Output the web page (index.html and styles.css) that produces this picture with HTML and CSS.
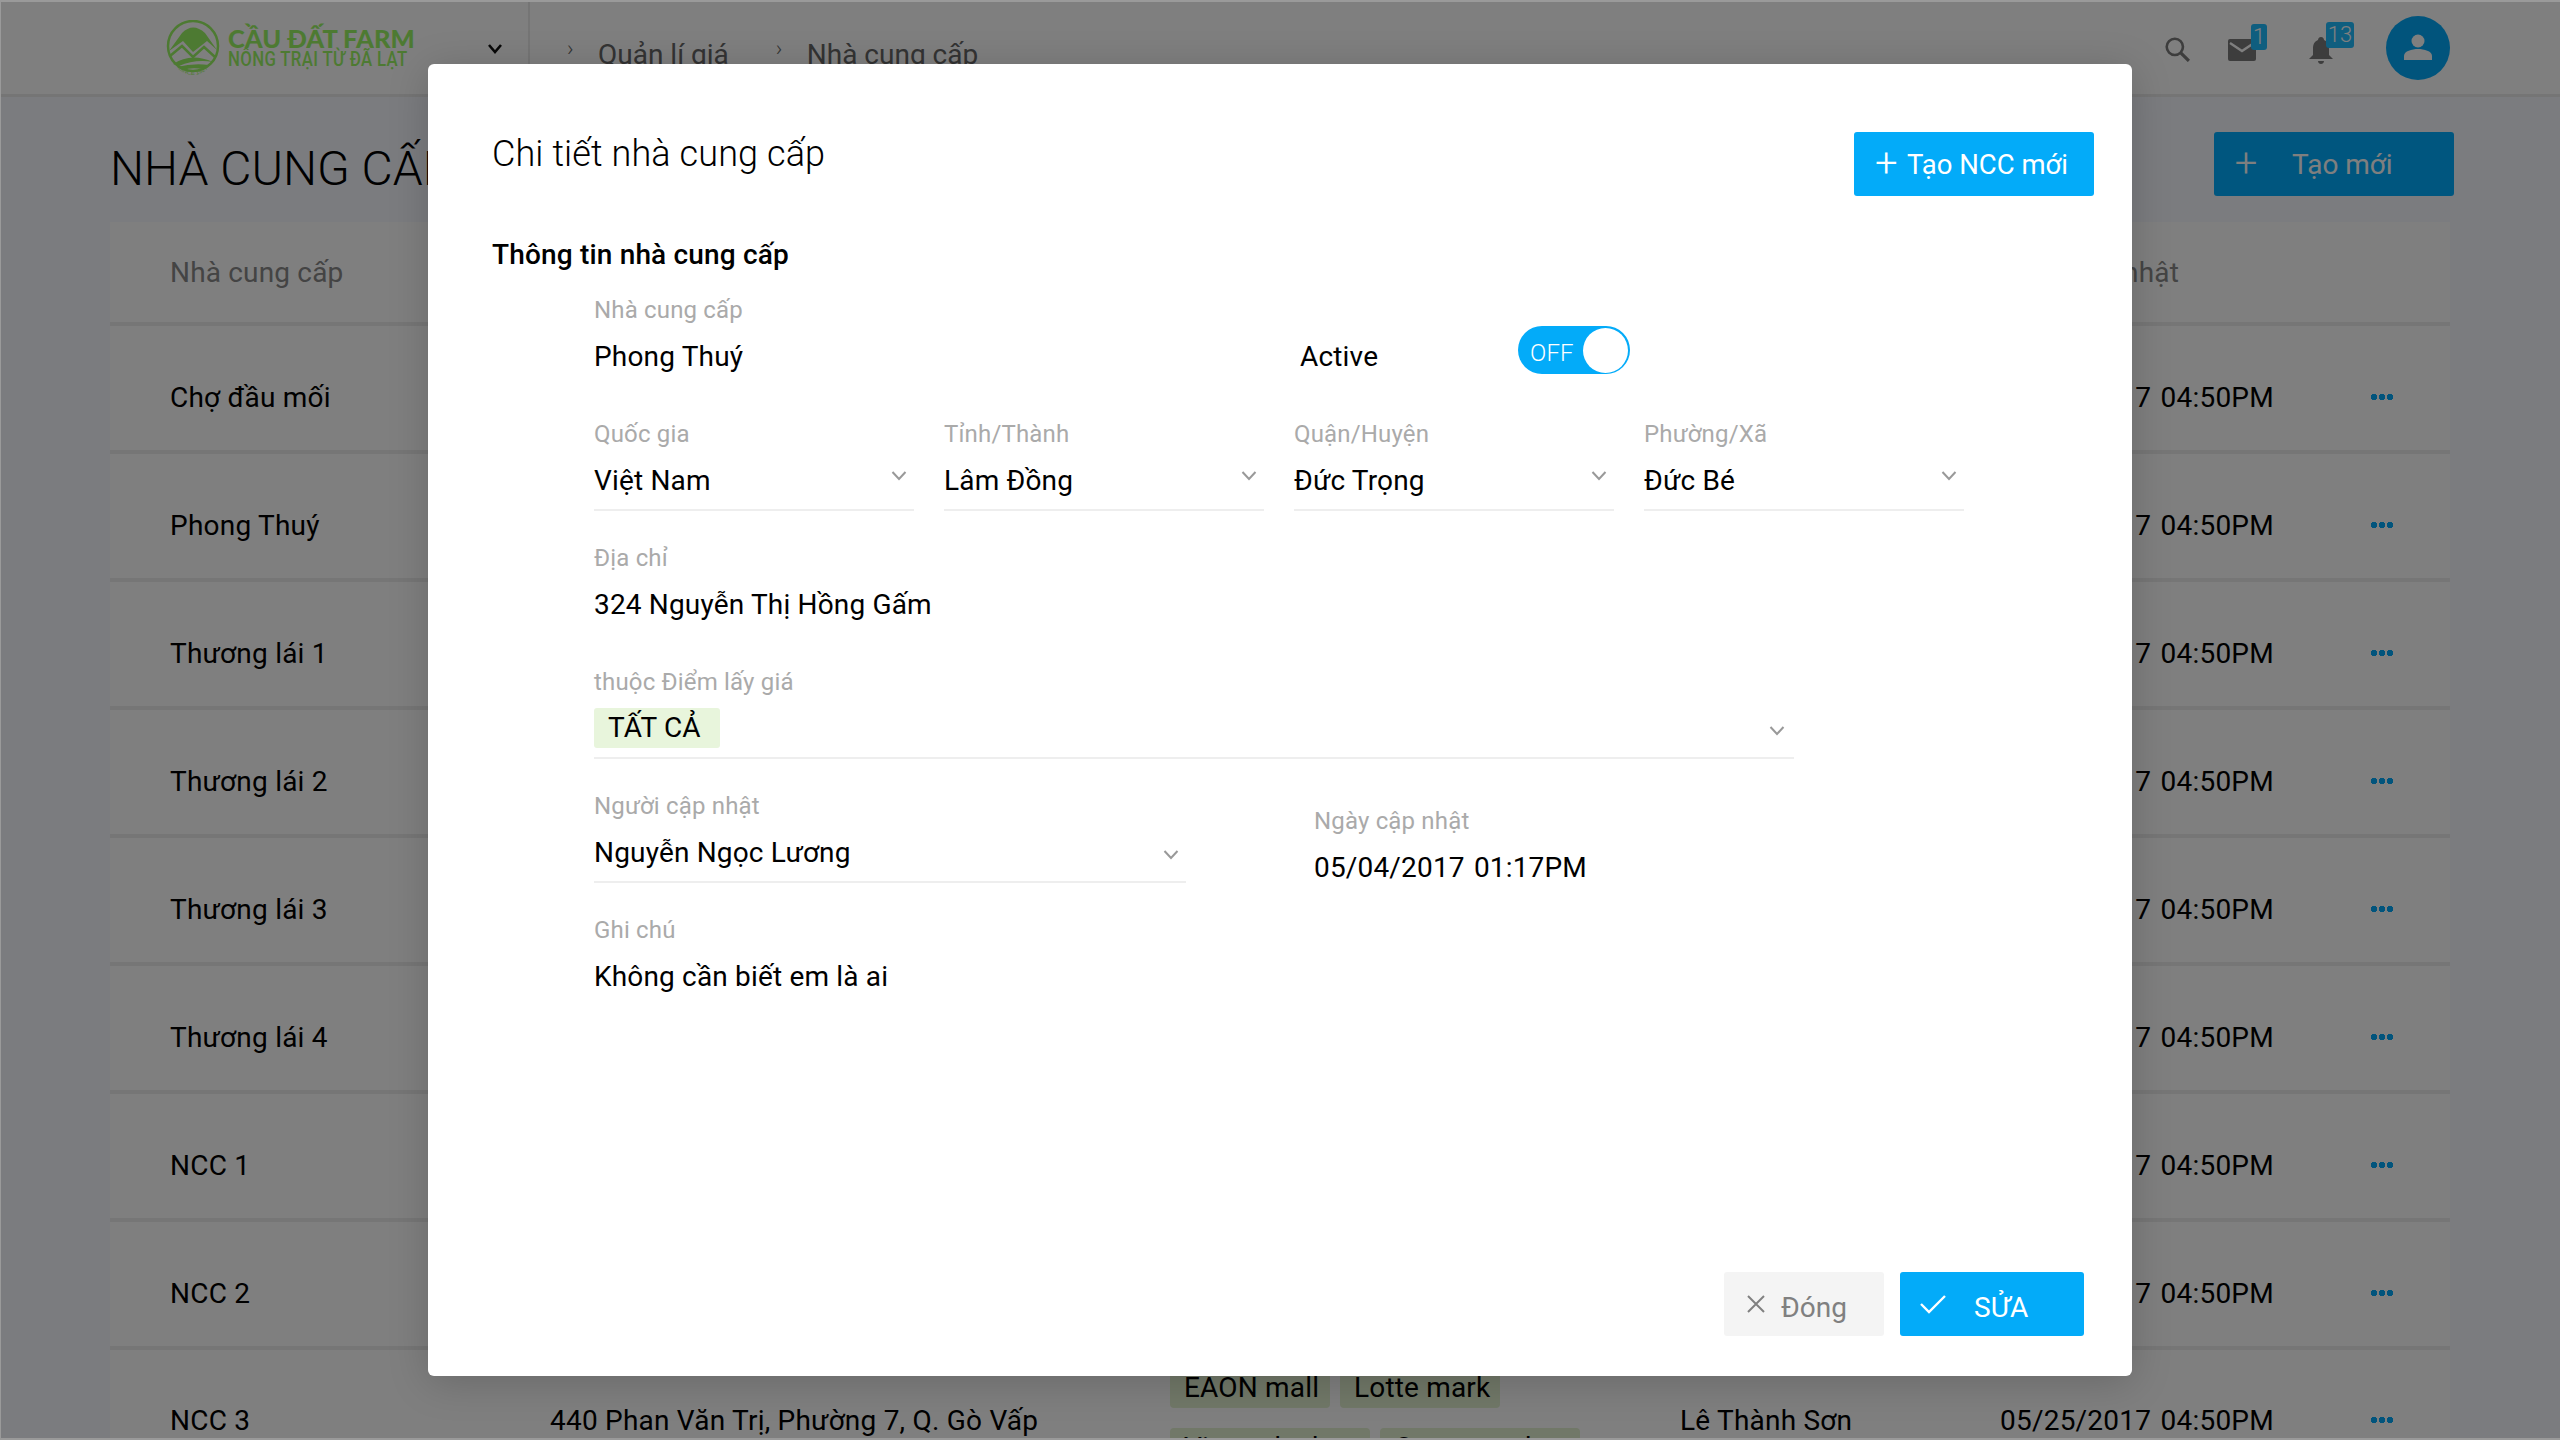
FILE: index.html
```html
<!DOCTYPE html>
<html lang="vi">
<head>
<meta charset="utf-8">
<title>Nhà cung cấp</title>
<link rel="stylesheet" href="styles.css">
</head>
<body>
<div class="page">
  <header class="topbar">
    <div class="brand">
      <svg class="logo-mark" viewBox="0 0 56 60" width="56" height="60">
        <defs><path id="since-arc" d="M12 48 Q28 62 44 48"/></defs>
        <circle cx="28" cy="26" r="25" fill="none" stroke="#9bf565" stroke-width="2.500"/>
        <path d="M4 31 L17 13 Q28 2 40 13 L52 30 L42 21 L37 25 L28 32 L18 21 Z" fill="#9bf565"/>
        <path d="M5 36 L17 26 L28 37 L39 27 L50 37" fill="none" stroke="#9bf565" stroke-width="2.500"/>
        <path d="M8 44 Q26 32 48 42 Q30 39 14 46 Z M12 47 Q28 43 44 45 L38 49 Q26 47 18 50 Z" fill="#9bf565"/>
        <text class="since"><textPath href="#since-arc" startOffset="50%" text-anchor="middle">SINCE 1927</textPath></text>
      </svg>
      <div class="brand-text">
        <div class="brand-name">CẦU ĐẤT FARM</div>
        <div class="brand-sub">NÔNG TRẠI TỪ ĐÃ LẠT</div>
      </div>
    </div>
    <svg class="brand-chevron" viewBox="0 0 16 12" width="16" height="12"><path d="M2 2 L8 9 L14 2" fill="none" stroke="#111" stroke-width="2.600"/></svg>
    <nav class="crumbs">
      <span class="crumb-sep">›</span><span class="crumb">Quản lí giá</span>
      <span class="crumb-sep">›</span><span class="crumb">Nhà cung cấp</span>
    </nav>
    <div class="top-icons">
      <svg class="i-search" viewBox="0 0 24 24" width="26" height="26"><circle cx="10" cy="10" r="7.500" fill="none" stroke="#7a7a7a" stroke-width="2.400"/><path d="M15.500 15.500 L23 23" stroke="#7a7a7a" stroke-width="3"/></svg>
      <div class="notify notify-mail">
        <svg viewBox="0 0 28 22" width="28" height="22"><rect width="28" height="22" rx="2" fill="#7a7a7a"/><path d="M2 4 L14 12 L26 4" fill="none" stroke="#fff" stroke-width="2.400"/></svg>
        <span class="badge badge-mail">1</span>
      </div>
      <div class="notify notify-bell">
        <svg viewBox="0 0 24 27" width="24" height="27"><path d="M12 0 C14 0 15 1.500 15 3 C19 4.500 20 8 20 12 V18 L24 22 H0 L4 18 V12 C4 8 5 4.500 9 3 C9 1.500 10 0 12 0 Z M9 24 H15 C15 26 13.500 27 12 27 C10.500 27 9 26 9 24 Z" fill="#7a7a7a"/></svg>
        <span class="badge badge-bell">13</span>
      </div>
      <div class="avatar">
        <svg viewBox="0 0 30 30" width="30" height="30"><circle cx="15" cy="8" r="6.500" fill="#fff"/><path d="M1 27 V23 C1 18 9 16 15 16 C21 16 29 18 29 23 V27 Z" fill="#fff"/></svg>
      </div>
    </div>
  </header>

  <div class="title-row">
    <h1 class="page-title">NHÀ CUNG CẤP</h1>
    <button class="btn-create"><span class="plus">+</span><span>Tạo mới</span></button>
  </div>

  <section class="table">
    <div class="thead">
      <div class="c-name">Nhà cung cấp</div>
      <div class="c-date c-date-head">Ngày cập nhật</div>
    </div>
    <div class="row"><div class="c-name">Chợ đầu mối</div><div class="c-addr"></div><div class="c-tags"></div><div class="c-user"></div><div class="c-date">05/25/2017&nbsp; 04:50PM</div><div class="c-more"></div></div>
    <div class="row"><div class="c-name">Phong Thuý</div><div class="c-addr"></div><div class="c-tags"></div><div class="c-user"></div><div class="c-date">05/25/2017&nbsp; 04:50PM</div><div class="c-more"></div></div>
    <div class="row"><div class="c-name">Thương lái 1</div><div class="c-addr"></div><div class="c-tags"></div><div class="c-user"></div><div class="c-date">05/25/2017&nbsp; 04:50PM</div><div class="c-more"></div></div>
    <div class="row"><div class="c-name">Thương lái 2</div><div class="c-addr"></div><div class="c-tags"></div><div class="c-user"></div><div class="c-date">05/25/2017&nbsp; 04:50PM</div><div class="c-more"></div></div>
    <div class="row"><div class="c-name">Thương lái 3</div><div class="c-addr"></div><div class="c-tags"></div><div class="c-user"></div><div class="c-date">05/25/2017&nbsp; 04:50PM</div><div class="c-more"></div></div>
    <div class="row"><div class="c-name">Thương lái 4</div><div class="c-addr"></div><div class="c-tags"></div><div class="c-user"></div><div class="c-date">05/25/2017&nbsp; 04:50PM</div><div class="c-more"></div></div>
    <div class="row"><div class="c-name">NCC 1</div><div class="c-addr"></div><div class="c-tags"></div><div class="c-user"></div><div class="c-date">05/25/2017&nbsp; 04:50PM</div><div class="c-more"></div></div>
    <div class="row"><div class="c-name">NCC 2</div><div class="c-addr"></div><div class="c-tags"></div><div class="c-user"></div><div class="c-date">05/25/2017&nbsp; 04:50PM</div><div class="c-more"></div></div>
    <div class="row row-tall"><div class="c-name">NCC 3</div><div class="c-addr">440 Phan Văn Trị, Phường 7, Q. Gò Vấp</div>
      <div class="c-tags tags-on"><span class="tag">EAON mall</span><span class="tag">Lotte mark</span><span class="tag tag-wide">Vinmark plus</span><span class="tag tag-wide">Co.op market</span></div>
      <div class="c-user">Lê Thành Sơn</div><div class="c-date">05/25/2017&nbsp; 04:50PM</div><div class="c-more"></div></div>
  </section>

  <div class="overlay"></div>
</div>

<div class="modal">
  <div class="modal-head">
    <h2 class="modal-title">Chi tiết nhà cung cấp</h2>
    <button class="btn btn-primary btn-new"><span class="btn-plus">+</span> Tạo NCC mới</button>
  </div>
  <h3 class="section-title">Thông tin nhà cung cấp</h3>
  <div class="form">
    <div class="form-row">
      <div class="field f-name"><div class="label">Nhà cung cấp</div><div class="value">Phong Thuý</div></div>
      <div class="active-label">Active</div>
      <div class="switch"><span class="switch-text">OFF</span><span class="knob"></span></div>
    </div>
    <div class="form-row four">
      <div class="field select"><div class="label">Quốc gia</div><div class="value">Việt Nam</div><svg class="chev" viewBox="0 0 16 10" width="16" height="10"><path d="M1.500 1 L8 8 L14.500 1"/></svg></div>
      <div class="field select"><div class="label">Tỉnh/Thành</div><div class="value">Lâm Đồng</div><svg class="chev" viewBox="0 0 16 10" width="16" height="10"><path d="M1.500 1 L8 8 L14.500 1"/></svg></div>
      <div class="field select"><div class="label">Quận/Huyện</div><div class="value">Đức Trọng</div><svg class="chev" viewBox="0 0 16 10" width="16" height="10"><path d="M1.500 1 L8 8 L14.500 1"/></svg></div>
      <div class="field select"><div class="label">Phường/Xã</div><div class="value">Đức Bé</div><svg class="chev" viewBox="0 0 16 10" width="16" height="10"><path d="M1.500 1 L8 8 L14.500 1"/></svg></div>
    </div>
    <div class="form-row">
      <div class="field"><div class="label">Địa chỉ</div><div class="value">324 Nguyễn Thị Hồng Gấm</div></div>
    </div>
    <div class="form-row">
      <div class="field select f-wide"><div class="label">thuộc Điểm lấy giá</div><div class="chips"><span class="chip">TẤT CẢ</span></div><svg class="chev chev-low" viewBox="0 0 16 10" width="16" height="10"><path d="M1.500 1 L8 8 L14.500 1"/></svg></div>
    </div>
    <div class="form-row">
      <div class="field select f-user"><div class="label">Người cập nhật</div><div class="value">Nguyễn Ngọc Lương</div><svg class="chev chev-mid" viewBox="0 0 16 10" width="16" height="10"><path d="M1.500 1 L8 8 L14.500 1"/></svg></div>
      <div class="field f-date"><div class="label">Ngày cập nhật</div><div class="value date-value">05/04/2017&nbsp; 01:17PM</div></div>
    </div>
    <div class="form-row">
      <div class="field"><div class="label">Ghi chú</div><div class="value">Không cần biết em là ai</div></div>
    </div>
  </div>
  <div class="modal-foot">
    <button class="btn btn-close"><svg viewBox="0 0 20 20" width="20" height="20"><path d="M2 2 L18 18 M18 2 L2 18" stroke="#808080" stroke-width="2" fill="none"/></svg><span>Đóng</span></button>
    <button class="btn btn-primary btn-edit"><svg viewBox="0 0 26 20" width="26" height="20"><path d="M1 10 L9 18 L25 2" stroke="#fff" stroke-width="2.400" fill="none"/></svg><span>SỬA</span></button>
  </div>
</div>
</body>
</html>
```
FILE: styles.css
```css
* { box-sizing: border-box; }
html, body { margin: 0; padding: 0; height: 100%; }
body {
  width: 2560px;
  height: 1440px;
  overflow: hidden;
  position: relative;
  background: #9a9a9a;
  font-family: Roboto, "Noto Sans", sans-serif;
  color: #000;
  letter-spacing: .17px;
}
button { font-family: inherit; border: 0; cursor: pointer; letter-spacing: 0; }
.page {
  position: absolute;
  top: 2px; left: 1px; right: 0; bottom: 2px;
  overflow: hidden;
  background: #f6f8fe;
}
.overlay {
  position: absolute;
  inset: 0;
  background: rgba(0, 0, 0, .5);
}
/* top bar */
.topbar {
  height: 95px;
  background: #fff;
  border-bottom: 3px solid #eaeaea;
  display: flex;
  align-items: center;
  position: relative;
  letter-spacing: 0;
}
.brand {
  display: flex;
  align-items: center;
  gap: 7px;
  margin-left: 164px;
  width: 250px;
  flex-shrink: 0;
}
.logo-mark { flex-shrink: 0; margin-top: 4px; }
.since { font-size: 6px; fill: #9bf565; font-family: "Liberation Sans", sans-serif; }
.brand-text { color: #9bf565; line-height: 1; margin-top: -1px; }
.brand-name { font-family: Lato, sans-serif; font-weight: 900; font-size: 25.500px; line-height: 25px; white-space: nowrap; }
.brand-sub {
  font-family: Roboto, sans-serif;
  font-weight: 500;
  font-size: 19.500px;
  line-height: 18px;
  white-space: nowrap;
  letter-spacing: .4px;
  transform: scaleX(.86);
  transform-origin: left center;
}
.brand-chevron { margin-left: 72px; flex-shrink: 0; margin-top: 2px; }
.crumbs {
  display: flex;
  align-items: center;
  height: 100%;
  margin-left: 25px;
  padding-left: 37px;
  border-left: 2px solid #eaeaea;
  font-size: 28px;
  color: #666;
  padding-top: 12px;
}
.crumb-sep { font-size: 22px; width: 31px; margin-top: -12px; font-weight: 300; }
.crumb { margin-right: 47px; }
.top-icons {
  position: absolute;
  top: 0; right: 110px; bottom: 0;
  display: flex;
  align-items: center;
}
.i-search { margin-right: 38px; margin-top: 2px; }
.notify { position: relative; display: flex; }
.notify-mail { margin-right: 53px; margin-top: 4px; }
.notify-bell { margin-right: 53px; margin-top: 4px; }
.badge {
  position: absolute;
  top: -15px;
  height: 26px;
  border-radius: 3px;
  background: #1fbcff;
  color: #fff;
  font-size: 22px;
  line-height: 26px;
  text-align: center;
  font-weight: 300;
}
.badge-mail { left: 23px; width: 16px; }
.badge-bell { left: 17px; width: 28px; }
.avatar {
  width: 64px; height: 64px;
  border-radius: 50%;
  background: #03a9f8;
  display: flex;
  align-items: center;
  justify-content: center;
}
/* title */
.title-row {
  display: flex;
  align-items: center;
  justify-content: space-between;
  height: 119px;
  padding: 0 106px 0 109px;
  margin-top: 6px;
}
.page-title { margin: 12px 0 0; font-weight: 300; font-size: 48px; letter-spacing: 0; }
.btn-create {
  width: 240px; height: 64px;
  margin-top: 3px;
  background: #00adff;
  color: #fff;
  border-radius: 3px;
  font-size: 28px;
  display: flex;
  align-items: center;
  padding: 0;
}
.plus { font-size: 40px; font-weight: 300; width: 64px; margin-right: 14px; text-align: center; line-height: 1; }
/* table */
.table { margin: 0 110px 0 109px; background: #fff; }
.thead {
  height: 104px;
  background: #fff;
  border-bottom: 4px solid #ececec;
  display: grid;
  grid-template-columns: 1833px 1fr;
  align-items: center;
  font-size: 28px;
  color: #888;
  padding-left: 60px;
}
.row {
  display: grid;
  grid-template-columns: 380px 620px 510px 320px 360px 1fr;
  height: 128px;
  padding-left: 60px;
  padding-top: 54px;
  border-bottom: 4px solid #ececec;
  font-size: 28px;
  line-height: 36px;
  letter-spacing: .22px;
}
.row-tall { height: 160px; padding-top: 18px; }
.row-tall > div { padding-top: 35px; }
.row-tall .tags-on { padding-top: 0; }
.c-date { white-space: nowrap; word-spacing: -2.500px; }
.c-more { padding-left: 11px; }
.c-more::before {
  content: "";
  display: block;
  width: 22px;
  height: 6px;
  margin-top: 14px;
  background: radial-gradient(circle at 3px 3px, #03a9f8 3px, transparent 3.500px) 0 0 / 8px 6px repeat-x;
}
.tags-on { display: flex; flex-wrap: wrap; gap: 20px 10px; align-content: flex-start; }
.tag {
  height: 40px;
  line-height: 40px;
  background: #e2f0d0;
  padding: 0 10px 0 14px;
  border-radius: 4px;
  font-size: 28px;
  width: 160px;
  white-space: nowrap;
  overflow: hidden;
  letter-spacing: .17px;
}
.tag-wide { width: 200px; }
/* modal */
.modal {
  position: absolute;
  left: 428px; top: 64px;
  width: 1704px; height: 1312px;
  background: #fff;
  border-radius: 6px;
  box-shadow: 0 6px 40px rgba(0, 0, 0, .18);
  padding: 0 38px 0 64px;
  display: flex;
  flex-direction: column;
}
.modal-head {
  display: flex;
  justify-content: space-between;
  align-items: flex-start;
  padding-top: 68px;
  height: 164px;
}
.modal-title { margin: -1px 0 0; font-weight: 300; font-size: 36px; line-height: 46px; letter-spacing: .1px; }
.btn {
  height: 64px;
  border-radius: 3px;
  font-size: 28px;
  display: flex;
  align-items: center;
}
.btn-primary { background: #03abf9; color: #fff; }
.btn-new { width: 240px; padding: 0 0 0 21px; gap: 3px; white-space: pre; font-size: 27.500px; }
.btn-plus { font-size: 40px; font-weight: 300; line-height: 1; }
.section-title { margin: 8px 0 0; font-weight: 500; font-size: 28px; line-height: 37px; }
.form { margin: 19px 0 0 102px; display: flex; flex-direction: column; }
.form-row { height: 124px; display: flex; position: relative; }
.four { gap: 30px; }
.field { position: relative; width: 592px; height: 95px; }
.four .field { width: 320px; }
.select { border-bottom: 2px solid #eee; }
.label { font-size: 24px; line-height: 36px; color: #aaa; white-space: nowrap; }
.value { font-size: 28px; line-height: 36px; margin-top: 11px; white-space: nowrap; }
.date-value { word-spacing: -2.500px; }
.chev { position: absolute; right: 7px; top: 55px; fill: none; stroke: #999; stroke-width: 2; }
.f-name { width: 706px; }
.active-label { font-size: 28px; line-height: 36px; margin-top: 47px; width: 218px; }
.switch {
  width: 112px; height: 48px;
  margin-top: 34px;
  border-radius: 24px;
  background: #03abf9;
  position: relative;
  color: #fff;
  font-size: 24px;
  line-height: 48px;
  padding-left: 12px;
}
.switch-text { display: block; margin-top: 3px; font-weight: 300; }
.knob {
  position: absolute;
  right: 2px; top: 2px;
  width: 45px; height: 45px;
  border-radius: 50%;
  background: #fff;
}
.f-wide { width: 1200px; }
.chips { margin-top: 8px; display: flex; }
.chip {
  height: 40px;
  line-height: 39px;
  background: #e8f5dc;
  border-radius: 3px;
  padding: 0 19px 0 14px;
  font-size: 28px;
}
.chev-low { top: 62px; right: 9px; }
.f-user { width: 592px; }
.chev-mid { top: 62px; }
.f-date { margin: 15px 0 0 128px; }
.modal-foot {
  margin-top: auto;
  display: flex;
  justify-content: flex-end;
  gap: 16px;
  padding: 0 10px 40px 0;
}
.btn-close {
  width: 160px;
  background: #f4f4f4;
  color: #808080;
  padding-left: 22px;
  gap: 15px;
}
.btn-close span { margin-top: 6px; }
.btn-edit { width: 184px; padding-left: 20px; gap: 28px; }
.btn-edit span { margin-top: 6px; }
```
